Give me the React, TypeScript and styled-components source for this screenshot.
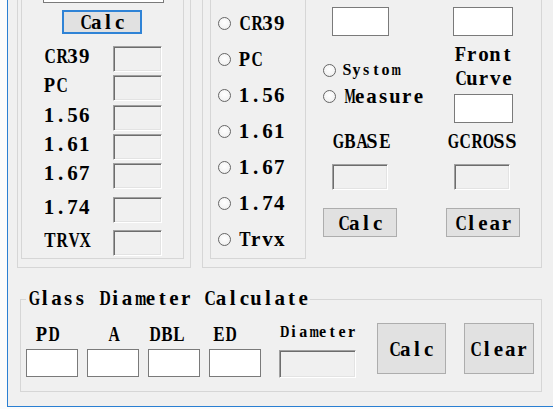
import React from "react";
import styled, { createGlobalStyle } from "styled-components";

const Global = createGlobalStyle`
  html, body { margin: 0; padding: 0; background: #fbfbfb; }
  body {
    width: 553px; height: 409px; overflow: hidden;
    font-family: "Liberation Serif", "DejaVu Serif", serif;
    color: #000;
  }
  * { box-sizing: border-box; }
`;

const Window = styled.div`
  box-sizing: content-box;
  margin-left: 7px;
  width: 546px;
  height: 406px;
  border-left: 1px solid #2a7fd2;
  border-bottom: 1px solid #2a7fd2;
  background: #f0f0f0;
  overflow: hidden;
`;

const TopRow = styled.div`
  display: flex;
  align-items: flex-start;
  margin-top: -40px;
  padding-left: 9px;
`;

const Group = styled.div<{ $w: number; $h: number; $pl?: number; $pt?: number; $ml?: number }>`
  display: flex;
  align-items: flex-start;
  width: ${(p) => p.$w}px;
  height: ${(p) => p.$h}px;
  border: 1px solid #d6d6d6;
  padding-left: ${(p) => p.$pl ?? 0}px;
  padding-top: ${(p) => p.$pt ?? 0}px;
  margin-left: ${(p) => p.$ml ?? 0}px;
  flex-shrink: 0;
`;

/* Text drawn in fixed-width cells, like the half-width latin of a CJK UI font */
const TextWrap = styled.span<{ $small?: boolean; $lh?: number }>`
  display: inline-block;
  font-family: "Liberation Serif", "DejaVu Serif", serif;
  font-weight: bold;
  font-size: ${(p) => (p.$small ? 16 : 21)}px;
  line-height: ${(p) => p.$lh ?? (p.$small ? 16 : 20)}px;
  white-space: nowrap;
  color: #000;
`;

const Cell = styled.span<{ $small?: boolean }>`
  display: inline-block;
  width: ${(p) => (p.$small ? 9.7 : 11.75)}px;
  text-align: center;
  transform-origin: 50% 50%;
`;

const Line = styled.span`
  display: block;
`;

/* Times-compatible bold advance widths, per 1000 em */
const W: Record<string, number> = {
  A: 722, B: 667, C: 722, D: 722, E: 667, F: 611, G: 778, H: 778, I: 389, J: 500, K: 778, L: 667, M: 944,
  N: 722, O: 778, P: 611, Q: 778, R: 722, S: 556, T: 667, U: 722, V: 722, W: 1000, X: 722, Y: 722, Z: 667,
  a: 500, b: 556, c: 444, d: 556, e: 444, f: 333, g: 500, h: 556, i: 278, j: 333, k: 556, l: 278, m: 833,
  n: 556, o: 500, p: 556, q: 556, r: 444, s: 389, t: 333, u: 556, v: 500, w: 722, x: 500, y: 500, z: 444,
  ".": 250, " ": 250,
};

function Text({ children, small, lh }: { children: string; small?: boolean; lh?: number }) {
  const fs = small ? 16 : 21;
  const target = small ? 9.4 : 11.3;
  const lines = children.split("\n");
  return (
    <TextWrap $small={small} $lh={lh}>
      {lines.map((ln, li) => {
        const cells = Array.from(ln).map((c, i) => {
          const adv = ((W[c] ?? 500) / 1000) * fs;
          const s = Math.min(1, target / adv);
          return (
            <Cell key={i} $small={small} style={s < 1 ? { transform: `scaleX(${s.toFixed(3)})` } : undefined}>
              {c === " " ? "\u00a0" : c}
            </Cell>
          );
        });
        return lines.length > 1 ? <Line key={li}>{cells}</Line> : <React.Fragment key={li}>{cells}</React.Fragment>;
      })}
    </TextWrap>
  );
}

const Edit = styled.input<{ $w: number; $h: number; $ml?: number; $mt?: number }>`
  display: block;
  width: ${(p) => p.$w}px;
  height: ${(p) => p.$h}px;
  margin: ${(p) => p.$mt ?? 0}px 0 0 ${(p) => p.$ml ?? 0}px;
  padding: 0;
  background: #fff;
  border: 1px solid #7a7a7a;
  outline: none;
  flex-shrink: 0;
`;

const ReadBox = styled.input<{ $w: number; $h: number; $ml?: number; $mt?: number }>`
  display: block;
  width: ${(p) => p.$w}px;
  height: ${(p) => p.$h}px;
  margin: ${(p) => p.$mt ?? 0}px 0 0 ${(p) => p.$ml ?? 0}px;
  padding: 0;
  background: #f0f0f0;
  border-style: solid;
  border-width: 1px;
  border-color: #a0a0a0 #ffffff #ffffff #a0a0a0;
  box-shadow: inset 1px 1px 0 #6d6d6d, inset -1px -1px 0 #e3e3e3;
  outline: none;
  flex-shrink: 0;
`;

const Button = styled.button<{ $w: number; $h: number; $ml?: number; $mt?: number; $focus?: boolean }>`
  display: flex;
  align-items: center;
  justify-content: center;
  width: ${(p) => p.$w}px;
  height: ${(p) => p.$h}px;
  margin: ${(p) => p.$mt ?? 0}px 0 0 ${(p) => p.$ml ?? 0}px;
  padding: 0;
  background: #e1e1e1;
  border: ${(p) => (p.$focus ? "2px solid #2f83d6" : "1px solid #adadad")};
  font-family: inherit;
  color: #000;
  flex-shrink: 0;
`;

/* ---------- left group ---------- */
const LeftInner = styled.div`
  display: flex;
  flex-direction: column;
  width: 163px;
  height: 293px;
  border: 1px solid #d6d6d6;
  padding-left: 21px;
  flex-shrink: 0;
`;

const LeftRow = styled.div<{ $mt: number }>`
  display: flex;
  align-items: center;
  height: 26px;
  margin-top: ${(p) => p.$mt}px;
`;

const RowLabel = styled.div`
  width: 70px;
  margin-bottom: 6px;
`;

/* ---------- radio group ---------- */
const RadioInner = styled.div`
  display: flex;
  flex-direction: column;
  width: 96px;
  height: 293px;
  border: 1px solid #d6d6d6;
  padding-top: 38px;
  flex-shrink: 0;
`;

const RadioItem = styled.div<{ $h: number; $pl?: number; $gap?: number }>`
  display: flex;
  align-items: center;
  height: ${(p) => p.$h}px;
  padding-left: ${(p) => p.$pl ?? 0}px;
  gap: ${(p) => p.$gap ?? 7}px;
`;

const Circle = styled.span`
  display: block;
  width: 13px;
  height: 13px;
  border-radius: 50%;
  border: 1px solid #666;
  background: radial-gradient(circle at 50% 40%, #ffffff 0%, #f4f4f4 60%, #e4e4e4 100%);
  flex-shrink: 0;
`;

/* ---------- right area ---------- */
const RightArea = styled.div`
  display: flex;
  flex-direction: column;
  padding-left: 17px;
  width: 235px;
`;

const Cols = styled.div<{ $mt: number }>`
  display: grid;
  grid-template-columns: 123px 1fr;
  align-items: start;
  margin-top: ${(p) => p.$mt}px;
`;

const Col = styled.div<{ $ml?: number; $mt?: number }>`
  display: flex;
  flex-direction: column;
  align-items: flex-start;
  margin-left: ${(p) => p.$ml ?? 0}px;
  margin-top: ${(p) => p.$mt ?? 0}px;
`;

/* ---------- glass group ---------- */
const Fieldset = styled.fieldset`
  margin: 20px 0 0 12px;
  width: 522px;
  height: 104px;
  padding: 0 0 0 5px;
  border: 1px solid #d6d6d6;
  min-width: 0;
`;

const Legend = styled.legend`
  padding: 0 1px;
  margin-left: 0;
  line-height: 22px;
  height: 22px;
`;

const GlassRow = styled.div`
  display: flex;
  align-items: flex-start;
`;

const Field = styled.div<{ $ml?: number; $mt?: number }>`
  display: flex;
  flex-direction: column;
  margin-left: ${(p) => p.$ml ?? 0}px;
  margin-top: ${(p) => p.$mt ?? 0}px;
`;

const FieldLabel = styled.div<{ $pl?: number }>`
  padding-left: ${(p) => p.$pl ?? 0}px;
`;

const leftRows: { label: string; mt: number }[] = [
  { label: "CR39", mt: 12 },
  { label: "PC", mt: 3 },
  { label: "1.56", mt: 4 },
  { label: "1.61", mt: 3 },
  { label: "1.67", mt: 3 },
  { label: "1.74", mt: 8 },
  { label: "TRVX", mt: 7 },
];

const radios = ["CR39", "PC", "1.56", "1.61", "1.67", "1.74", "Trvx"];

const fields: { label: string; ml: number; pl: number }[] = [
  { label: "PD", ml: 0, pl: 9 },
  { label: "A", ml: 9, pl: 20 },
  { label: "DBL", ml: 9, pl: 0 },
  { label: "ED", ml: 9, pl: 3 },
];

export default function App() {
  return (
    <>
      <Global />
      <Window>
        <TopRow>
          <Group $w={174} $h={308} $pl={3} $pt={5}>
            <LeftInner>
              <Edit $w={121} $h={27} $mt={9} />
              <Button $w={80} $h={24} $mt={7} $ml={19} $focus>
                <Text>Calc</Text>
              </Button>
              {leftRows.map((r) => (
                <LeftRow key={r.label} $mt={r.mt}>
                  <RowLabel>
                    <Text>{r.label}</Text>
                  </RowLabel>
                  <ReadBox $w={49} $h={26} readOnly />
                </LeftRow>
              ))}
            </LeftInner>
          </Group>
          <Group $w={340} $h={308} $pl={7} $pt={5} $ml={11}>
            <RadioInner>
              {radios.map((r) => (
                <RadioItem key={r} $h={36} $pl={7}>
                  <Circle />
                  <Text>{r}</Text>
                </RadioItem>
              ))}
            </RadioInner>
            <RightArea>
              <Cols $mt={41}>
                <Edit $w={57} $h={29} $ml={9} />
                <Edit $w={60} $h={29} $ml={7} />
              </Cols>
              <Cols $mt={0}>
                <Col $mt={21}>
                  <RadioItem $h={26} $gap={6}>
                    <Circle />
                    <Text small>Systom</Text>
                  </RadioItem>
                  <RadioItem $h={26} $gap={6}>
                    <Circle />
                    <Text>Measure</Text>
                  </RadioItem>
                </Col>
                <Col $ml={8} $mt={6}>
                  <Text lh={24}>{"Front\nCurve"}</Text>
                  <Edit $w={59} $h={29} $mt={4} />
                </Col>
              </Cols>
              <Cols $mt={8}>
                <Col $ml={8}>
                  <Text>GBASE</Text>
                </Col>
                <Col>
                  <Text>GCROSS</Text>
                </Col>
              </Cols>
              <Cols $mt={13}>
                <ReadBox $w={56} $h={26} $ml={9} readOnly />
                <ReadBox $w={56} $h={26} $ml={8} readOnly />
              </Cols>
              <Cols $mt={18}>
                <Button $w={74} $h={29}>
                  <Text>Calc</Text>
                </Button>
                <Button $w={74} $h={29}>
                  <Text>Clear</Text>
                </Button>
              </Cols>
            </RightArea>
          </Group>
        </TopRow>
        <Fieldset>
          <Legend>
            <Text>Glass Diameter Calculate</Text>
          </Legend>
          <GlassRow>
            {fields.map((f) => (
              <Field key={f.label} $ml={f.ml} $mt={14}>
                <FieldLabel $pl={f.pl}>
                  <Text>{f.label}</Text>
                </FieldLabel>
                <Edit $w={52} $h={28} $mt={4} />
              </Field>
            ))}
            <Field $ml={18} $mt={13}>
              <FieldLabel>
                <Text small>Diameter</Text>
              </FieldLabel>
              <ReadBox $w={77} $h={28} $mt={9} readOnly />
            </Field>
            <Button $w={69} $h={51} $ml={20} $mt={13}>
              <Text>Calc</Text>
            </Button>
            <Button $w={70} $h={51} $ml={18} $mt={13}>
              <Text>Clear</Text>
            </Button>
          </GlassRow>
        </Fieldset>
      </Window>
    </>
  );
}
